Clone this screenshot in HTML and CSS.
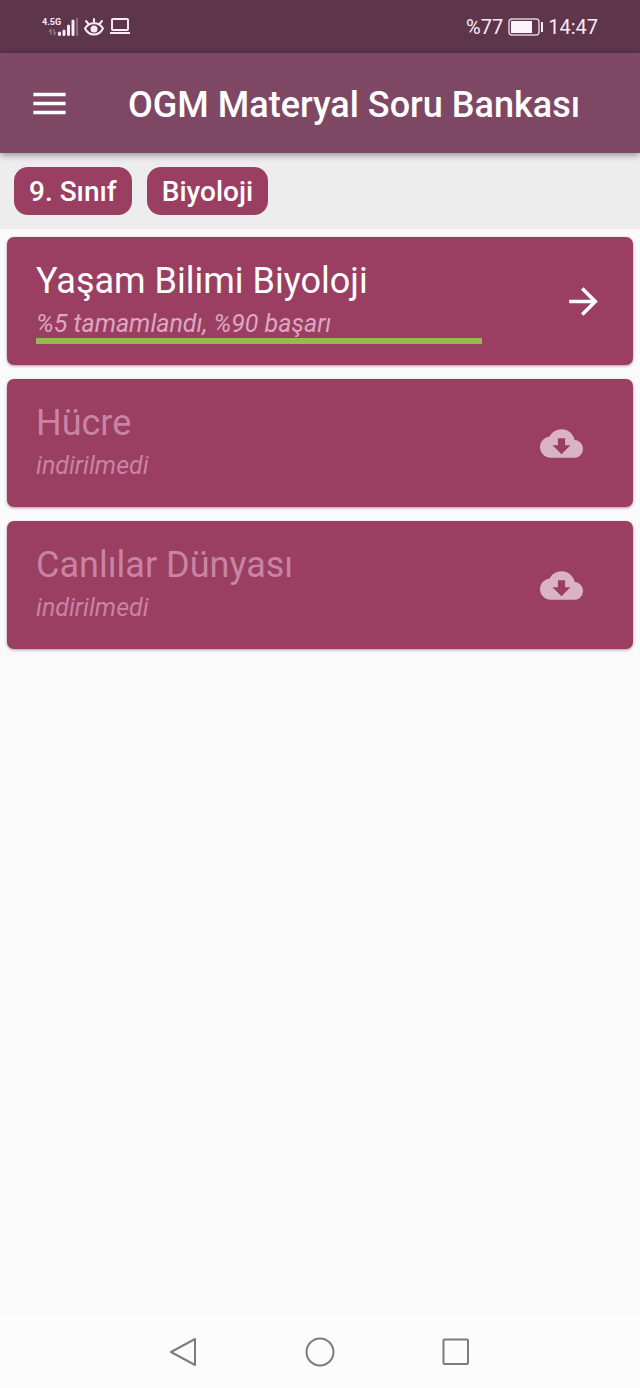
FILE: index.html
```html
<!DOCTYPE html>
<html lang="tr">
<head>
    <meta charset="UTF-8">
    <meta name="viewport" content="width=device-width, initial-scale=1.0">
    <title>OGM Materyal Soru Bankası</title>
    <link rel="stylesheet" href="styles.css">
</head>
<body>
    <div class="status-bar">
        <div class="status-left">
            <div class="network">
                <span class="network-type">4.5G</span>
                <svg class="signal" width="36" height="18" viewBox="0 0 36 18" aria-hidden="true">
                    <path d="M9 11v6M7 14l2-3M12 11v6M12 17l2-3" stroke="#8d6b80" stroke-width="1.500" fill="none"/>
                    <path d="M17.500 15v1.500M22 13v3.500M26.500 8v8.500M31 3v13.500" stroke="#fbeaf5" stroke-width="3" stroke-linecap="round"/>
                    <path d="M35 0v18" stroke="#8d6b80" stroke-width="2"/>
                </svg>
            </div>
            <svg width="20" height="20" viewBox="0 0 20 20" fill="none" stroke="#fbeaf5" stroke-width="2" stroke-linecap="round" aria-hidden="true">
                <path d="M1 11.500C5 4.500 15 4.500 19 11.500C15 19.500 5 19.500 1 11.500z"/>
                <path d="M10 5V2M4.500 7L2 4M15.500 7L18 4"/>
                <circle cx="10" cy="12" r="2.500" fill="#fbeaf5"/>
            </svg>
            <svg width="20" height="20" viewBox="0 0 20 20" fill="none" stroke="#fbeaf5" stroke-width="2" aria-hidden="true">
                <rect x="2" y="2" width="16" height="11" rx="1"/>
                <path d="M0 16h20"/>
            </svg>
        </div>
        <div class="status-right">
            <span>%77</span>
            <svg width="35" height="18" viewBox="0 0 35 18" aria-hidden="true">
                <rect x="1" y="1" width="30" height="16" rx="3" fill="none" stroke="#e3cbd9" stroke-width="1.500"/>
                <path d="M3 3h21v12H3z" fill="#fbf3f9"/>
                <path d="M34 4v10" stroke="#fbeaf5" stroke-width="2"/>
            </svg>
            <time>14:47</time>
        </div>
    </div>

    <header class="app-bar">
        <button type="button" class="menu-btn" aria-label="Menü">
            <svg width="43" height="43" viewBox="0 0 24 24" fill="#fff"><path d="M3 18h18v-2H3v2zm0-5h18v-2H3v2zm0-7v2h18V6H3z"/></svg>
        </button>
        <h1 class="app-title">OGM Materyal Soru Bankası</h1>
    </header>

    <nav class="filters">
        <button type="button" class="chip">9. Sınıf</button>
        <button type="button" class="chip">Biyoloji</button>
    </nav>

    <main class="units">
        <a href="#yasam-bilimi" class="card">
            <div class="card-body">
                <h2 class="card-title">Yaşam Bilimi Biyoloji</h2>
                <p class="card-info">%5 tamamlandı, %90 başarı</p>
                <div class="progress"></div>
            </div>
            <svg class="card-icon" width="43" height="43" viewBox="0 0 24 24" fill="#fff" aria-hidden="true"><path d="M12 4l-1.410 1.410L16.170 11H4v2h12.170l-5.580 5.590L12 20l8-8z"/></svg>
        </a>
        <a href="#hucre" class="card locked">
            <div class="card-body">
                <h2 class="card-title">Hücre</h2>
                <p class="card-info">indirilmedi</p>
            </div>
            <svg class="card-icon" width="43" height="43" viewBox="0 0 24 24" fill="#dab3c5" aria-hidden="true"><path d="M19.350 10.040C18.670 6.590 15.640 4 12 4 9.110 4 6.600 5.640 5.350 8.040 2.340 8.360 0 10.910 0 14c0 3.310 2.690 6 6 6h13c2.760 0 5-2.240 5-5 0-2.640-2.050-4.780-4.650-4.960zM17 13l-5 5-5-5h3V9h4v4h3z"/></svg>
        </a>
        <a href="#canlilar" class="card locked">
            <div class="card-body">
                <h2 class="card-title">Canlılar Dünyası</h2>
                <p class="card-info">indirilmedi</p>
            </div>
            <svg class="card-icon" width="43" height="43" viewBox="0 0 24 24" fill="#dab3c5" aria-hidden="true"><path d="M19.350 10.040C18.670 6.590 15.640 4 12 4 9.110 4 6.600 5.640 5.350 8.040 2.340 8.360 0 10.910 0 14c0 3.310 2.690 6 6 6h13c2.760 0 5-2.240 5-5 0-2.640-2.050-4.780-4.650-4.960zM17 13l-5 5-5-5h3V9h4v4h3z"/></svg>
        </a>
    </main>

    <nav class="nav-bar">
        <button type="button" class="nav-btn" aria-label="Geri">
            <svg width="32" height="32" viewBox="0 0 32 32"><path d="M27 3v26L3 16z"/></svg>
        </button>
        <button type="button" class="nav-btn" aria-label="Ana ekran">
            <svg width="32" height="32" viewBox="0 0 32 32"><circle cx="16" cy="16" r="13.500"/></svg>
        </button>
        <button type="button" class="nav-btn" aria-label="Son uygulamalar">
            <svg width="32" height="32" viewBox="0 0 32 32"><rect x="3.500" y="3.500" width="24.500" height="24.500" rx="1"/></svg>
        </button>
    </nav>
</body>
</html>
```

FILE: styles.css
```css
* {
    margin: 0;
    padding: 0;
    box-sizing: border-box;
}

body {
    min-height: 100vh;
    display: flex;
    flex-direction: column;
    background-color: #fafafa;
    font-family: Roboto, "Noto Sans", sans-serif;
}

button {
    border: none;
    background: none;
    font-family: inherit;
    cursor: pointer;
}

svg {
    display: block;
}

/* status bar */
.status-bar {
    height: 53px;
    padding: 0 42px;
    display: flex;
    justify-content: space-between;
    align-items: center;
    background-color: #5d364c;
    color: #fbeaf5;
    font-size: 20px;
}

.status-left,
.status-right {
    display: flex;
    align-items: center;
}

.status-left {
    gap: 6px;
}

.status-right {
    gap: 5px;
}

.network {
    position: relative;
}

.network-type {
    position: absolute;
    top: -1px;
    left: 0;
    font-size: 9px;
    line-height: 10px;
    font-weight: 700;
}

/* app bar */
.app-bar {
    position: relative;
    height: 100px;
    padding: 0 28px;
    display: flex;
    align-items: center;
    gap: 57px;
    background-color: #7e4865;
    box-shadow: 0 2px 7px rgba(0, 0, 0, 0.4);
}

.app-title {
    padding-top: 4px;
    color: #fff;
    font-size: 36px;
    line-height: 42px;
    font-weight: 500;
    white-space: nowrap;
}

/* filters */
.filters {
    padding: 14px;
    display: flex;
    gap: 15px;
    background-color: #ededed;
}

.chip {
    height: 48px;
    padding: 0 15px;
    border-radius: 14px;
    background-color: #9a3e62;
    color: #fff;
    font-size: 28px;
    font-weight: 500;
}

/* unit cards */
.units {
    flex: 1;
    padding: 8px 7px;
    display: flex;
    flex-direction: column;
    gap: 14px;
}

.card {
    min-height: 128px;
    padding: 0 28px 0 29px;
    display: flex;
    align-items: center;
    border-radius: 7px;
    background-color: #9a3e62;
    box-shadow: 0 1px 3px rgba(80, 0, 40, 0.4);
    color: #fff;
    text-decoration: none;
}

.card-body {
    flex: 1;
    min-height: 86px;
    padding-top: 2px;
}

.card-icon {
    margin-left: 80px;
}

.card-title {
    font-size: 36px;
    line-height: 42px;
    font-weight: 400;
}

.card-info {
    margin-top: 8px;
    color: #dda6c1;
    font-size: 25px;
    line-height: 28px;
    font-style: italic;
}

.progress {
    height: 6px;
    background-color: #98b853;
}

.locked .card-title,
.locked .card-info {
    color: #c983a3;
}

.locked .card-icon {
    margin-right: 22px;
}

/* system navigation */
.nav-bar {
    height: 73px;
    display: flex;
    justify-content: center;
    align-items: center;
    gap: 104px;
    background-color: #fcfcfc;
}

.nav-btn svg {
    fill: none;
    stroke: #7c7c7c;
    stroke-width: 2;
    stroke-linejoin: round;
}
```
